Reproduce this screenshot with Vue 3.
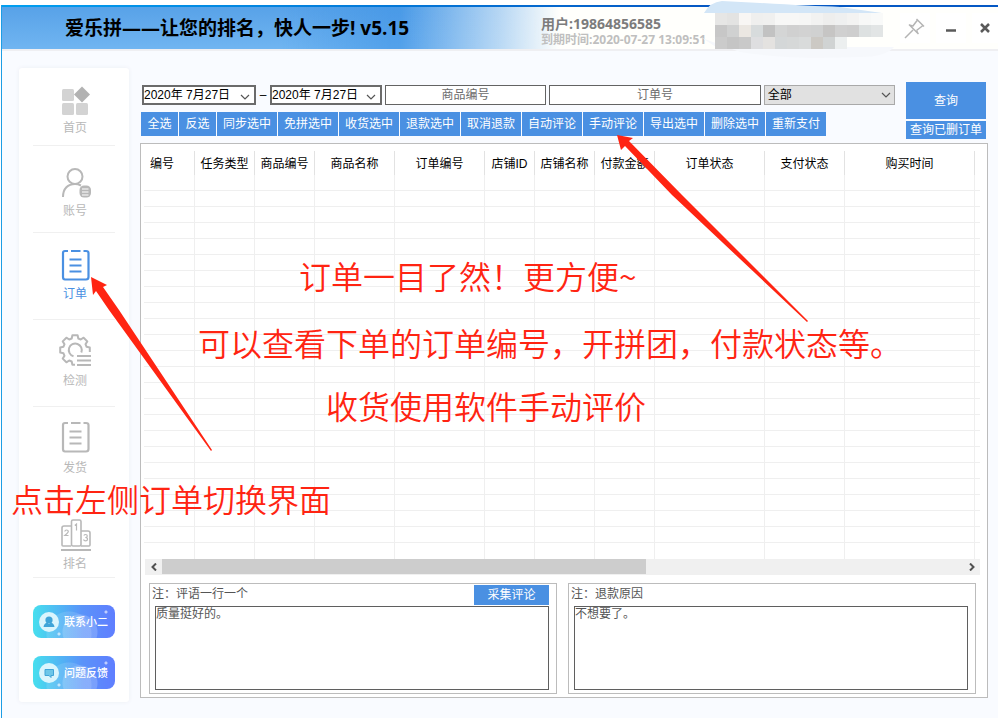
<script setup>
import { ref } from 'vue'

const navItems = [
  { id: 'home', label: '首页' },
  { id: 'account', label: '账号' },
  { id: 'order', label: '订单' },
  { id: 'check', label: '检测' },
  { id: 'ship', label: '发货' },
  { id: 'rank', label: '排名' },
]
const active = ref('order')

const actions = [
  '全选', '反选', '同步选中', '免拼选中', '收货选中', '退款选中',
  '取消退款', '自动评论', '手动评论', '导出选中', '删除选中', '重新支付',
]

const columns = [
  { name: '编号', key: 'c51' },
  { name: '任务类型', key: 'c60' },
  { name: '商品编号', key: 'c60' },
  { name: '商品名称', key: 'c80' },
  { name: '订单编号', key: 'c90' },
  { name: '店铺ID', key: 'c50' },
  { name: '店铺名称', key: 'c60' },
  { name: '付款金额', key: 'c60' },
  { name: '订单状态', key: 'c110' },
  { name: '支付状态', key: 'c80' },
  { name: '购买时间', key: 'c130' },
]
const rowCount = 24

const dateFrom = ref('2020年 7月27日')
const dateTo = ref('2020年 7月27日')
const goodsNo = ref('')
const orderNo = ref('')
const comments = ref('质量挺好的。')
const reasons = ref('不想要了。')

const mosaic = [
  ['#e6e6e5', '#e3e3e2', '#f8f6f4', '#efefee', '#f0f0ef', '#f7f7f6', '#f7f7f6', '#f6f6f5', '#f2f2f1', '#eeeeed', '#eff0f0', '#f3f3f2', '#f7f8f7', '#f9faf9'],
  ['#c7c7c7', '#d0d1d1', '#ebe7e2', '#d7dbdc', '#c2c2c2', '#d4d5d5', '#d0d0d0', '#d2d2d2', '#d0d1d1', '#c6c5c4', '#d0d0d0', '#cecece', '#dde1e1', '#e2e5e5'],
  ['#cbcbcb', '#c5c5c5', '#c9c9c9', '#dedee0', '#e4e2e0', '#d4d7d8', '#d6d8d8', '#d9dbdb', '#ccc9c4', '#d0d3d3', '#ecefef'],
]
</script>

<template>
  <div class="page">
    <div class="window">
      <header class="titlebar">
        <h1>爱乐拼——让您的排名，快人一步! v5.15</h1>
        <div class="user">
          <div class="user-name">用户:19864856585</div>
          <div class="user-expire">到期时间:2020-07-27 13:09:51</div>
        </div>
        <div class="controls">
          <button type="button" aria-label="置顶">
            <svg width="22" height="22" viewBox="0 0 22 22" fill="none" stroke="#b4b4b4" stroke-width="1.5">
              <path d="M12.5 2 L20 9.5 M13.5 3 L8.5 9.5 M19 8.5 L12.5 13.5 M5 7.5 L14.5 17 M8.5 9 L5.5 8 M12.5 13.5 L14 16.5 M9 13 L1 21" />
            </svg>
          </button>
          <button type="button" aria-label="最小化">
            <svg width="12" height="12" viewBox="0 0 12 12"><path d="M1 8.500h10" stroke="#5a5a5a" stroke-width="2.5" /></svg>
          </button>
          <button type="button" aria-label="关闭">
            <svg width="12" height="12" viewBox="0 0 12 12"><path d="M2 2l8 8M10 2l-8 8" stroke="#5a5a5a" stroke-width="2.5" /></svg>
          </button>
        </div>
        <svg class="mask" width="200" height="60" viewBox="0 0 200 60" aria-hidden="true">
          <path d="M4 13 Q10 2 22 1 L60 3 Q110 6 140 7 L182 13 Z" fill="#d3e6f7" />
          <path d="M2 38 L16 47 L194 47 Q186 57 160 57 Q90 60 40 52 Z" fill="#f6f8fc" />
          <g v-for="(row, r) in mosaic" :key="r">
            <rect v-for="(c, i) in row" :key="i" :x="15 + i * 12" :y="13 + r * 12" width="12" height="12" :fill="c" />
          </g>
        </svg>
      </header>

      <main class="body">
        <nav class="sidebar">
          <a
            v-for="item in navItems"
            :key="item.id"
            href="#"
            class="nav-item"
            :class="[item.id, { active: item.id === active }]"
            @click.prevent="active = item.id"
          >
            <svg v-if="item.id === 'home'" width="32" height="32" viewBox="0 0 32 32">
              <rect x="3" y="6" width="12" height="12" rx="1.5" fill="#d3d3d3" />
              <rect x="3" y="20" width="12" height="12" rx="1.5" fill="#d3d3d3" />
              <rect x="17" y="20" width="12" height="12" rx="1.5" fill="#d3d3d3" />
              <path d="M23 3.5 L31 11.5 L23 19.5 L15 11.5 Z" fill="#b2b2b2" />
            </svg>
            <svg v-else-if="item.id === 'account'" width="32" height="32" viewBox="0 0 32 32" fill="none" stroke="currentColor" stroke-width="2">
              <circle cx="16" cy="10.500" r="7.500" />
              <path d="M4 31 C4 22.500 9 18 16 18 Q19 18 22 19.500" />
              <rect x="20.500" y="19.500" width="11.500" height="12" rx="4.500" fill="currentColor" stroke="none" />
              <path d="M23 23h6.500M23 26h6.500M23 29h6.500" stroke="#fff" stroke-width="1.200" />
            </svg>
            <svg v-else-if="item.id === 'order' || item.id === 'ship'" width="32" height="32" viewBox="0 0 32 32" fill="none" stroke="currentColor" stroke-width="2.200">
              <path d="M9 2 H6 Q4 2 4 4 V28 Q4 30.500 6 30.500 H27 Q29.500 30.500 29.500 28 V4 Q29.500 2 27 2 H24.500 M12 2 H21.500" />
              <path d="M10.500 10.500h12M10.500 16.500h12M10.500 22.500h12" />
            </svg>
            <svg v-else-if="item.id === 'check'" width="32" height="32" viewBox="0 0 32 32" fill="none" stroke="currentColor" stroke-width="2" stroke-linejoin="round">
              <path d="M30.800 18V13.400L27.500 12.700L26.500 10.200L28.300 7.400L24.600 3.700L21.800 5.500L19.300 4.500L18.600 1.200H13.400L12.700 4.500L10.200 5.500L7.400 3.700L3.700 7.400L5.500 10.200L4.500 12.700L1.200 13.400V18.600L4.500 19.300L5.500 21.800L3.700 24.600L7.400 28.300L10.200 26.500L12.700 27.500L13.400 30.800H16" />
              <path d="M14.500 22.300 A6.500 6.500 0 1 1 22.300 18.500" />
              <path d="M18 22h14M18 26.500h14M18 31h14" />
            </svg>
            <svg v-else width="32" height="32" viewBox="0 0 32 32" fill="none" stroke="currentColor" stroke-width="1.600">
              <path d="M12 27 H4 Q3 27 3 26 V9 Q3 7 5 7 H12 M22 12 H29 Q31 12 31 14 V26 Q31 27 30 27 H22" />
              <rect x="12.500" y="1" width="9.500" height="26" rx="1.500" />
              <path d="M2 31 H32" stroke-width="2" />
              <path d="M5.800 12.500 Q6 11 7.500 11 Q9.300 11 9.300 12.600 Q9.300 13.500 5.800 16.500 H9.500 M15.800 6.500 L17.500 5 V11.500 M24.800 16.500 Q25.500 15.500 26.500 15.500 Q28.300 15.500 28.300 17 Q28.300 18.500 26.300 18.500 Q28.500 18.500 28.500 20.200 Q28.500 21.800 26.500 21.800 Q25 21.800 24.500 20.500" stroke-width="1.200" />
            </svg>
            <span>{{ item.label }}</span>
          </a>
          <button type="button" class="help">
            <svg width="20" height="20" viewBox="0 0 20 20">
              <circle cx="10" cy="10" r="10" fill="#d9f5fd" />
              <circle cx="10" cy="8" r="3.600" fill="#3fa4d8" />
              <path d="M4.500 15 Q5 11 8.500 10.500 L10 12 L11.500 10.500 Q15 11 15.500 15 Z" fill="#3fa4d8" />
            </svg>
            联系小二
          </button>
          <button type="button" class="help">
            <svg width="20" height="20" viewBox="0 0 20 20">
              <circle cx="10" cy="10" r="10" fill="#d9f5fd" />
              <path d="M6 6.500h8.500v6h-2.500v2l-2-2H6z" fill="#6cc6e8" stroke="#3fa4d8" />
            </svg>
            问题反馈
          </button>
        </nav>

        <section class="content">
          <div class="toolbar">
            <div class="tools">
              <div class="filters">
                <label class="date">
                  <input v-model="dateFrom" type="text" aria-label="开始日期" />
                  <svg width="10" height="6" viewBox="0 0 10 6"><path d="M1 1l4 4 4-4" fill="none" stroke="#555" stroke-width="1.200" /></svg>
                </label>
                <span class="dash">–</span>
                <label class="date">
                  <input v-model="dateTo" type="text" aria-label="结束日期" />
                  <svg width="10" height="6" viewBox="0 0 10 6"><path d="M1 1l4 4 4-4" fill="none" stroke="#555" stroke-width="1.200" /></svg>
                </label>
                <input v-model="goodsNo" class="field goods" type="text" placeholder="商品编号" aria-label="商品编号" />
                <input v-model="orderNo" class="field orderno" type="text" placeholder="订单号" aria-label="订单号" />
                <label class="state">
                  <select aria-label="状态"><option>全部</option></select>
                  <svg width="10" height="6" viewBox="0 0 10 6"><path d="M1 1l4 4 4-4" fill="none" stroke="#555" stroke-width="1.200" /></svg>
                </label>
              </div>
              <div class="actions">
                <button v-for="a in actions" :key="a" type="button" :class="{ short: a.length === 2 }">{{ a }}</button>
              </div>
            </div>
            <div class="query">
              <button type="button" class="big">查询</button>
              <button type="button" class="small">查询已删订单</button>
            </div>
          </div>

          <div class="box">
            <table>
              <colgroup>
                <col v-for="c in columns" :key="c.name" :class="c.key" />
                <col />
              </colgroup>
              <thead>
                <tr>
                  <th v-for="c in columns" :key="c.name" scope="col"><span>{{ c.name }}</span></th>
                  <td></td>
                </tr>
              </thead>
              <tbody>
                <tr v-for="n in rowCount" :key="n">
                  <td v-for="c in columns" :key="c.name"></td>
                  <td></td>
                </tr>
              </tbody>
            </table>
            <div class="scrollbar">
              <button type="button" aria-label="向左滚动"><svg width="8" height="8" viewBox="0 0 8 8"><path d="M6 0.500L2.500 4L6 7.500" fill="none" stroke="#505050" stroke-width="2" /></svg></button>
              <div class="track"><div class="thumb"></div></div>
              <button type="button" aria-label="向右滚动"><svg width="8" height="8" viewBox="0 0 8 8"><path d="M2 0.500L5.500 4L2 7.500" fill="none" stroke="#505050" stroke-width="2" /></svg></button>
            </div>
            <div class="notes">
              <div class="note">
                <div class="note-head">
                  <label for="comments">注：评语一行一个</label>
                  <button type="button">采集评论</button>
                </div>
                <textarea id="comments" v-model="comments"></textarea>
              </div>
              <div class="note">
                <div class="note-head"><label for="reasons">注：退款原因</label></div>
                <textarea id="reasons" v-model="reasons"></textarea>
              </div>
            </div>
          </div>
        </section>
      </main>
    </div>

    <div class="guide">
      <svg width="1004" height="718" viewBox="0 0 1004 718" fill="#ff2412" aria-hidden="true">
        <path d="M91 277 L107 285 L103 287 L119 310 L212 450 L211 451 L109 310 L96 291 L93 295 Z" />
        <path d="M617 135 L633 138 L629 141 L682 195 L808 321 L807 322 L672 195 L625 146 L621 150 Z" />
      </svg>
      <p class="g1">订单一目了然！更方便~</p>
      <p class="g2">可以查看下单的订单编号，开拼团，付款状态等。</p>
      <p class="g3">收货使用软件手动评价</p>
      <p class="g4">点击左侧订单切换界面</p>
    </div>
  </div>
</template>

<style>
body {
  margin: 0;
  background: #fff;
}
</style>

<style scoped>
* {
  box-sizing: border-box;
}
.page {
  position: relative;
  display: flex;
  min-height: 100vh;
  padding: 5px 6px 0 1px;
  overflow: hidden;
  font-family: "Liberation Sans", "Noto Sans CJK SC", sans-serif;
  font-size: 12px;
  line-height: 16px;
}
button,
input,
select,
textarea {
  margin: 0;
  padding: 0;
  border: 0;
  border-radius: 0;
  font: inherit;
  color: inherit;
}
.window {
  flex: 1;
  min-width: 0;
  border-left: 1px solid #1d9de4;
  background: #f9fbff;
}
.titlebar {
  position: relative;
  display: flex;
  align-items: center;
  height: 44px;
  padding-left: 63px;
  border-top: 2px solid #0a7ddd;
  border-image: linear-gradient(90deg, #009ff0, #0558c4 70%) 1;
  background:
    linear-gradient(90deg, rgba(255, 255, 252, 0) 40%, rgba(255, 255, 252, 0.6) 50%, #fffffc 56%),
    linear-gradient(90deg, rgba(64, 148, 230, 0) 28%, rgba(64, 148, 230, 0.6) 39%),
    linear-gradient(#58a2e8, #70b5f1);
  box-shadow: 0 2px 0 #efeff2;
}
h1 {
  flex: none;
  width: 476px;
  margin: 0;
  font: bold 19px/28px "Open Sans", "Noto Sans CJK SC", sans-serif;
  color: #000;
}
.user {
  flex: 1;
  min-width: 0;
  padding-top: 6px;
  font-family: "Open Sans", "Noto Sans CJK SC", sans-serif;
  font-weight: bold;
  white-space: nowrap;
}
.user-name {
  font-size: 14px;
  line-height: 18px;
  color: #7c7c7c;
}
.user-expire {
  font-size: 12px;
  line-height: 14px;
  color: #bfbfbf;
}
.controls {
  z-index: 1;
  display: flex;
  gap: 6px;
}
.controls button {
  display: grid;
  place-items: center;
  width: 30px;
  height: 30px;
  background: #fff;
}
.controls button:last-child {
  width: 26px;
}
.mask {
  position: absolute;
  left: 698px;
  top: -7px;
}
.body {
  display: flex;
  gap: 11px;
  padding: 19px 10px 15px 17px;
}
.sidebar {
  display: flex;
  flex: none;
  flex-direction: column;
  width: 110px;
  height: 634px;
  padding: 0 14px;
  border-radius: 3px;
  background: #fff;
  box-shadow: 0 0 4px #eceef3;
}
.nav-item {
  display: flex;
  flex-direction: column;
  gap: 5px;
  align-items: center;
  padding: 16px 0 17px 2px;
  border-bottom: 1px solid #f0f0f0;
  color: #b8b8b8;
  text-decoration: none;
}
.nav-item.home {
  padding-top: 15px;
  padding-bottom: 9px;
}
.nav-item.account {
  padding-top: 20px;
  padding-bottom: 13px;
}
.nav-item.check,
.nav-item.ship {
  gap: 7px;
  padding-top: 14px;
}
.nav-item.ship {
  border-color: transparent;
}
.nav-item.rank {
  padding-top: 25px;
  padding-bottom: 5px;
}
.nav-item.active {
  color: #4a90e2;
}
.help {
  display: flex;
  gap: 5px;
  align-items: center;
  height: 33px;
  margin-top: 18px;
  padding-left: 6px;
  border-radius: 8px;
  background:
    radial-gradient(circle at 73px 7px, rgba(255, 255, 255, 0.6) 1px, transparent 2px),
    radial-gradient(circle at 26px 29px, rgba(255, 255, 255, 0.6) 1px, transparent 2px),
    radial-gradient(circle at 47px 27px, rgba(255, 255, 255, 0.18) 17px, transparent 18px),
    radial-gradient(circle at 36px 29px, rgba(255, 255, 255, 0.12) 22px, transparent 23px),
    linear-gradient(90deg, #46dfee, #5a93f9 60%, #5f7eff);
  font-size: 11px;
  font-weight: 500;
  color: #fff;
  white-space: nowrap;
}
.rank + .help {
  margin-top: 27px;
}
.content {
  flex: 1;
  min-width: 0;
  padding-top: 14px;
}
.toolbar {
  display: flex;
  gap: 11px;
  padding: 0 2px 4px 1px;
}
.tools {
  flex: 1;
  min-width: 0;
  padding-top: 3px;
}
.filters {
  display: flex;
  gap: 3px;
  height: 20px;
  padding-left: 1px;
  color: #000;
}
.date {
  position: relative;
  display: flex;
  flex: none;
  width: 112px;
  border: 2px solid #6b6b6b;
  background: #fff;
}
.date:first-child {
  width: 114px;
}
.date input {
  width: 100%;
  background: transparent;
}
.date svg,
.state svg {
  position: absolute;
  right: 4px;
  top: 7px;
  pointer-events: none;
}
.dash {
  width: 8px;
  line-height: 20px;
  text-align: center;
}
.field {
  flex: 160;
  min-width: 0;
  border: 1px solid #636363;
  background: #fff;
  text-align: center;
}
.field::placeholder {
  color: #6b6b6b;
  opacity: 1;
}
.orderno {
  flex: 211;
}
.state {
  position: relative;
  flex: 132;
  min-width: 0;
}
.state select {
  width: 100%;
  height: 20px;
  padding-left: 3px;
  border: 1px solid #a9a9a9;
  appearance: none;
  background: #e1e1e1;
}
.actions {
  display: flex;
  gap: 1px;
  margin-top: 7px;
}
.actions button,
.query button,
.note-head button {
  background: #4a90e2;
  color: #fff;
  white-space: nowrap;
}
.actions button {
  width: 60px;
  height: 24px;
}
.actions button.short {
  width: 37px;
}
.query {
  display: flex;
  flex: none;
  flex-direction: column;
  gap: 2px;
  width: 80px;
}
.query .big {
  height: 37px;
}
.query .small {
  height: 18px;
}
.box {
  padding: 7px 0 3px;
  border: 1px solid #bcbcbc;
  background: #fff;
}
table {
  width: calc(100% - 10px);
  margin-left: 3px;
  border-spacing: 0;
  table-layout: fixed;
  color: #000;
}
.c50 { width: 50px; }
.c51 { width: 51px; }
.c60 { width: 60px; }
.c80 { width: 80px; }
.c90 { width: 90px; }
.c110 { width: 110px; }
.c130 { width: 130px; }
th,
td {
  padding: 0;
}
th {
  height: 24px;
  padding-top: 2px;
  border-right: 1px solid #e2e2e2;
  font-weight: normal;
  white-space: nowrap;
}
th:first-child {
  padding-left: 6px;
  text-align: left;
}
tbody td {
  height: 16px;
  border-right: 1px solid #efefef;
  border-bottom: 1px solid #efefef;
}
tbody td:last-child {
  border-right: 0;
}
tbody tr:last-child td {
  border-bottom: 0;
}
.scrollbar {
  display: flex;
  height: 16px;
  margin: 0 7px 0 4px;
  background: #f0f0f0;
}
.scrollbar button {
  display: grid;
  place-items: center;
  width: 17px;
  background: transparent;
}
.track {
  flex: 1;
}
.thumb {
  width: 60.4%;
  height: 15px;
  background: #cdcdcd;
}
.notes {
  display: flex;
  gap: 11px;
  padding: 8px 11px 0 8px;
}
.note {
  display: flex;
  flex: 1;
  flex-direction: column;
  min-width: 0;
  padding: 1px 7px 3px 2px;
  border: 1px solid #bcbcbc;
  color: #555;
}
.note-head {
  display: flex;
  justify-content: space-between;
  height: 21px;
  line-height: 18px;
}
.note-head button {
  width: 75px;
  height: 20px;
}
textarea {
  height: 84px;
  margin-left: 3px;
  border: 1px solid #5f5f5f;
  background: #fff;
  line-height: 14px;
  resize: none;
}
.guide {
  position: absolute;
  inset: 0;
  pointer-events: none;
  color: #ff2412;
}
.guide svg {
  position: absolute;
  left: 0;
  top: 0;
}
.guide p {
  position: absolute;
  margin: 0;
  font: 350 32px/40px "Noto Sans CJK SC", sans-serif;
  white-space: nowrap;
}
.g1 { left: 299px; top: 255px; }
.g2 { left: 198px; top: 322px; }
.g3 { left: 326px; top: 385px; }
.g4 { left: 11px; top: 478px; }
</style>
